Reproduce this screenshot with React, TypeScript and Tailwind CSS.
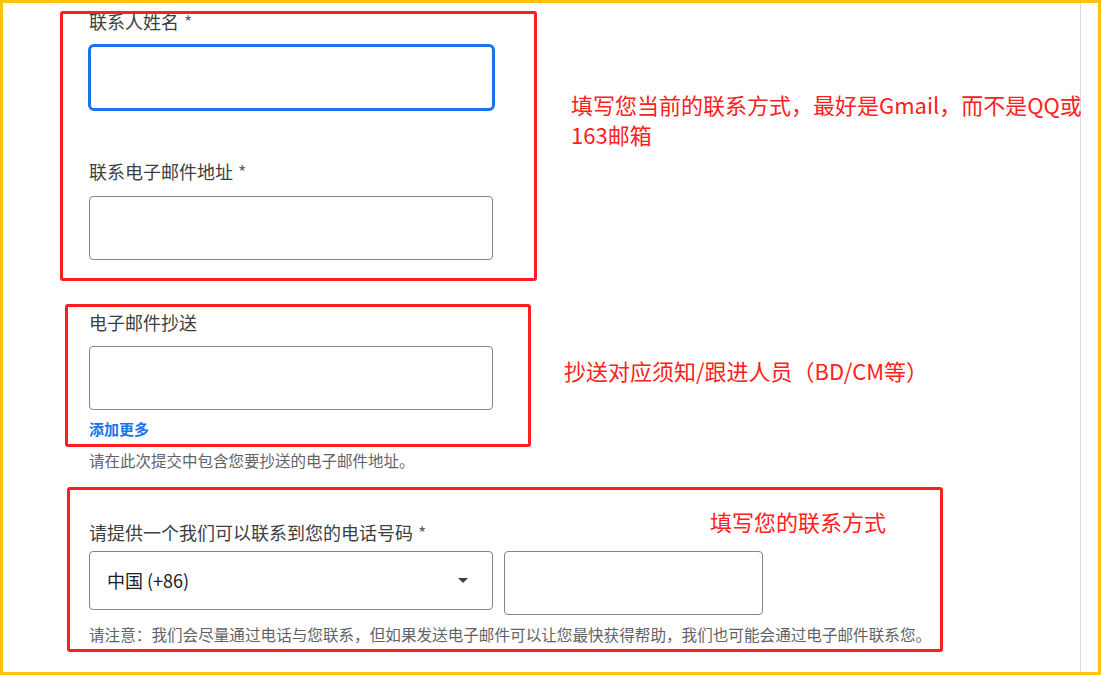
import React from "react";

const font = { fontFamily: '"Noto Sans CJK SC", "Noto Sans", sans-serif' };

function Label({ text, required }: { text: string; required?: boolean }) {
  return (
    <div className="h-[24px] text-[18px] leading-[24px] text-[#3c4043]">
      {text}
      {required && <span className="ml-[5px] text-[#5f6368]">*</span>}
    </div>
  );
}

function Box({ className }: { className: string }) {
  return (
    <div className={"pointer-events-none absolute rounded-[3px] border-[3px] border-[#ff1f1f] " + className} />
  );
}

export default function App() {
  return (
    <div className="h-[675px] w-[1101px] border-[3px] border-[#ffc20e] bg-white" style={font}>
      <div className="relative flex h-full w-full overflow-hidden">
        {/* form column */}
        <div className="w-[1077px] shrink-0 pl-[86px] pt-[6px]">
          <Label text="联系人姓名" required />
          <div className="-ml-px mt-[11px] h-[67px] w-[407px] rounded-[6px] border-[3px] border-[#1a73e8]" />

          <div className="mt-[48px]">
            <Label text="联系电子邮件地址" required />
          </div>
          <div className="mt-[13px] h-[64px] w-[404px] rounded-[4px] border border-[#80868b]" />

          <div className="mt-[50px]">
            <Label text="电子邮件抄送" />
          </div>
          <div className="mt-[12px] h-[64px] w-[404px] rounded-[4px] border border-[#80868b]" />
          <div className="mt-[9px] h-[20px] text-[15px] font-bold leading-[20px] text-[#1a73e8]">添加更多</div>
          <div className="mt-[11px] h-[20px] text-[15.5px] leading-[20px] text-[#5f6368]">
            请在此次提交中包含您要抄送的电子邮件地址。
          </div>

          <div className="mt-[50px]">
            <Label text="请提供一个我们可以联系到您的电话号码" required />
          </div>
          <div className="mt-[7px] flex items-start gap-[11px]">
            <div className="flex h-[59px] w-[404px] items-center justify-between rounded-[4px] border border-[#80868b] pl-[17px] pr-[24px]">
              <span className="text-[18px] text-[#202124]">中国 (+86)</span>
              <svg width="10" height="6" viewBox="0 0 10 6">
                <polygon points="0,0 10,0 5,5" fill="#3c4043" />
              </svg>
            </div>
            <div className="h-[64px] w-[259px] rounded-[4px] border border-[#80868b]" />
          </div>
          <div className="mt-[9px] h-[20px] whitespace-nowrap text-[15.6px] leading-[20px] text-[#5f6368]">
            请注意：我们会尽量通过电话与您联系，但如果发送电子邮件可以让您最快获得帮助，我们也可能会通过电子邮件联系您。
          </div>
        </div>
        <div className="w-px shrink-0 bg-[#dadce0]" />
        <div className="flex-1" />

        {/* annotations */}
        <Box className="left-[57px] top-[8px] h-[270px] w-[477px]" />
        <Box className="left-[62px] top-[301px] h-[143px] w-[466px]" />
        <Box className="left-[64px] top-[484px] h-[165px] w-[876px]" />

        <div className="absolute left-[568px] top-[86px] whitespace-nowrap text-[22px] leading-[30px] text-[#ff2020]">
          填写您当前的联系方式，最好是Gmail，而不是QQ或
          <br />
          163邮箱
        </div>
        <div className="absolute left-[561px] top-[352px] whitespace-nowrap text-[22px] leading-[30px] text-[#ff2020]">
          抄送对应须知/跟进人员（BD/CM等）
        </div>
        <div className="absolute left-[707px] top-[503px] whitespace-nowrap text-[22px] leading-[30px] text-[#ff2020]">
          填写您的联系方式
        </div>
      </div>
    </div>
  );
}
